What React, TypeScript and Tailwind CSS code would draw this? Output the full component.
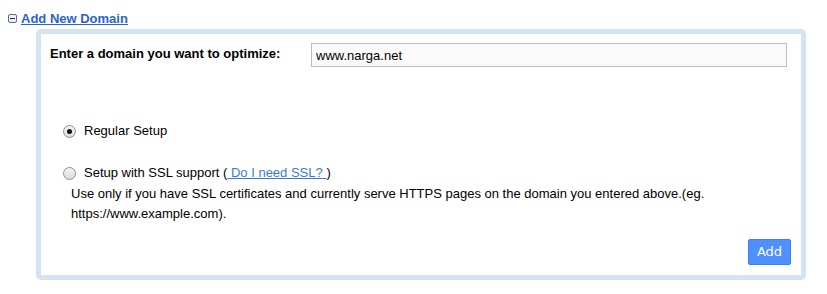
import React from "react";

function Radio({ checked }: { checked?: boolean }) {
  return (
    <span className="flex h-[13px] w-[13px] shrink-0 items-center justify-center rounded-full border border-[#8e8e8e] bg-gradient-to-b from-[#f4f4f4] to-[#dcdcdc]">
      {checked && <span className="h-[5px] w-[5px] rounded-full bg-[#111]" />}
    </span>
  );
}

export default function App() {
  return (
    <div
      className="h-[294px] w-[827px] bg-white text-[13px] text-black"
      style={{ fontFamily: '"Liberation Sans", Arial, sans-serif' }}
    >
      {/* header */}
      <div className="flex items-center pl-[8px] pt-[10px] leading-[17px]">
        <span className="mr-[4px] flex h-[9px] w-[9px] items-center justify-center rounded-[2px] border border-[#5d6b8a] bg-[#eef1f7]">
          <span className="h-px w-[5px] bg-[#2b3550]" />
        </span>
        <a href="#" className="font-bold text-[#2c62cf] underline">
          Add New Domain
        </a>
      </div>

      {/* domain box */}
      <div className="ml-[36px] mt-[2px] w-[770px] rounded-[5px] border-[5px] border-[#d3e3f3] px-[9px] pb-[10px] pt-[9px]">
        <div className="flex items-start">
          <label className="mt-[3px] w-[261px] font-bold leading-[15px]">
            Enter a domain you want to optimize:
          </label>
          <input
            readOnly
            value="www.narga.net"
            className="h-[24px] w-[476px] border border-[#bcbcbc] bg-[#fafafa] px-[4px] text-[13px] outline-none"
            style={{ fontFamily: '"Liberation Sans", Arial, sans-serif' }}
          />
        </div>

        <div className="mt-[54px] flex items-center gap-[8px] pl-[13px] leading-[20px]">
          <Radio checked />
          <span>Regular Setup</span>
        </div>

        <div className="mt-[22px] flex items-center gap-[8px] pl-[13px] leading-[20px]">
          <Radio />
          <span>
            Setup with SSL support (
            <a href="#" className="text-[#3a7ad6] underline">
              {" "}Do I need SSL?{" "}
            </a>
            )
          </span>
        </div>
        <p className="mt-px pl-[21px] leading-[20px]">
          Use only if you have SSL certificates and currently serve HTTPS pages on the domain you entered above.(eg.
          <br />
          https://www.example.com).
        </p>

        <div className="mt-[15px] flex justify-end pr-[1px]">
          <button
            className="h-[26px] w-[43px] rounded-[2px] border border-[#3c82f0] bg-[#4d90fe] text-[13px] text-white"
            style={{ fontFamily: '"DejaVu Sans", sans-serif' }}
          >
            Add
          </button>
        </div>
      </div>
    </div>
  );
}
